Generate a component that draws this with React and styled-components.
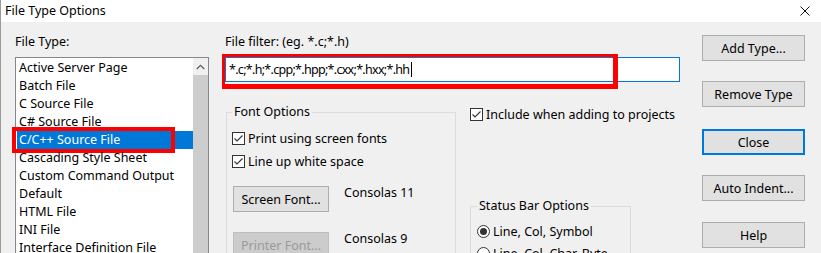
import React from "react";
import styled, { createGlobalStyle } from "styled-components";

const Global = createGlobalStyle`
  html, body { margin: 0; padding: 0; overflow: hidden; background: #f0f0f0; }
  * { box-sizing: border-box; }
`;

const FONT = `"Noto Sans", "Open Sans", sans-serif`;

const Dialog = styled.div`
  width: 821px;
  height: 253px;
  overflow: hidden;
  background: #f0f0f0;
  font-family: ${FONT};
  font-size: 12.5px;
  color: #000;
  border-left: 1px solid #9a9a9a;
`;

const TitleBar = styled.div`
  height: 22px;
  background: #fff;
  display: flex;
  align-items: center;
  justify-content: space-between;
  padding: 0 11px 0 4px;
`;

const Title = styled.span`
  font-size: 12.5px;
  line-height: 16px;
`;

const Body = styled.div`
  display: flex;
  align-items: flex-start;
  padding: 12px 0 0 14px;
`;

const LeftCol = styled.div`
  width: 194px;
  display: flex;
  flex-direction: column;
`;

const Label = styled.div`
  line-height: 16px;
  height: 16px;
  white-space: nowrap;
`;

const ListBox = styled.div`
  margin-top: 7px;
  height: 200px;
  border: 1px solid #828790;
  background: #fff;
  display: flex;
`;

const Items = styled.div`
  flex: 1;
  padding: 1px 0 0 1px;
`;

const Item = styled.div`
  position: relative;
  height: 18px;
  line-height: 18px;
  padding-left: 2px;
  white-space: nowrap;
  background: ${(p) => (p.$selected ? "#0078d7" : "transparent")};
  color: ${(p) => (p.$selected ? "#fff" : "#000")};
`;

const ItemMark = styled.span`
  position: absolute;
  left: -5px;
  top: -4px;
  width: 163px;
  height: 26px;
  border: 4px solid #ff0000;
  pointer-events: none;
`;

const ScrollBar = styled.div`
  width: 15px;
  display: flex;
  flex-direction: column;
  background: #cdcdcd;
`;

const ScrollArrow = styled.div`
  height: 17px;
  background: #f0f0f0;
  display: flex;
  align-items: center;
  justify-content: center;
`;

const MiddleCol = styled.div`
  width: 455px;
  margin-left: 16px;
  display: flex;
  flex-direction: column;
`;

const InputWrap = styled.div`
  position: relative;
  margin-top: 7px;
`;

const FilterField = styled.div`
  height: 25px;
  border: 1px solid #0078d7;
  background: #fff;
  padding-left: 3px;
  display: flex;
  align-items: center;
  white-space: nowrap;
  letter-spacing: -0.7px;
`;

const Caret = styled.span`
  display: inline-block;
  width: 1px;
  height: 15px;
  background: #000;
  margin-left: 2px;
`;

const InputMark = styled.span`
  position: absolute;
  left: -3px;
  top: -3px;
  width: 396px;
  height: 35px;
  border-style: solid;
  border-color: #ff0000;
  border-width: 3px 5px 5px 3px;
  pointer-events: none;
`;

const OptionsRow = styled.div`
  display: flex;
  align-items: flex-start;
  margin-top: 22px;
`;

const Group = styled.fieldset`
  margin: ${(p) => p.$mt || 0}px 0 0 ${(p) => p.$ml || 0}px;
  width: ${(p) => p.$w}px;
  height: ${(p) => p.$h}px;
  border: 1px solid #dcdcdc;
  padding: 0 0 0 ${(p) => p.$pl}px;
  min-width: 0;
`;

const Legend = styled.legend`
  padding: 0 2px;
  line-height: 16px;
  white-space: nowrap;
`;

const CheckRow = styled.div`
  display: flex;
  align-items: center;
  gap: 3px;
  height: 17px;
  white-space: nowrap;
  margin-top: ${(p) => p.$mt || 0}px;
`;

const Box = styled.span`
  width: 13px;
  height: 13px;
  border: 1px solid #333;
  background: #fff;
  display: inline-flex;
  flex: none;
`;

const RadioCircle = styled.span`
  width: 13px;
  height: 13px;
  border: 1px solid #333;
  border-radius: 50%;
  background: #fff;
  display: inline-flex;
  align-items: center;
  justify-content: center;
  flex: none;
`;

const RadioDot = styled.span`
  width: 7px;
  height: 7px;
  border-radius: 50%;
  background: #333;
`;

const FontRow = styled.div`
  display: flex;
  align-items: flex-start;
  margin-top: ${(p) => p.$mt}px;
  padding-left: 1px;
`;

const Button = styled.div`
  width: ${(p) => p.$w}px;
  height: 26px;
  flex: none;
  margin-top: ${(p) => p.$mt || 0}px;
  display: flex;
  align-items: center;
  justify-content: center;
  white-space: nowrap;
  background: ${(p) => (p.$disabled ? "#cccccc" : "#e1e1e1")};
  color: ${(p) => (p.$disabled ? "#9a9a9a" : "#000")};
  border: ${(p) =>
    p.$default ? "2px solid #0078d7" : p.$disabled ? "1px solid #bfbfbf" : "1px solid #adadad"};
`;

const FontName = styled.span`
  margin-left: 15px;
  margin-top: -1px;
  line-height: 16px;
  white-space: nowrap;
`;

const SideCol = styled.div`
  margin-left: 14px;
  margin-top: 2px;
  display: flex;
  flex-direction: column;
`;

const ButtonCol = styled.div`
  width: 103px;
  margin-left: 22px;
  margin-top: 1px;
  display: flex;
  flex-direction: column;
`;

const Check = () => (
  <Box>
    <svg width="11" height="11" viewBox="0 0 11 11">
      <path d="M1.5 5.5 L4 8 L9.5 2.5" fill="none" stroke="#333" strokeWidth="1.1" />
    </svg>
  </Box>
);

const types = [
  "Active Server Page",
  "Batch File",
  "C Source File",
  "C# Source File",
  "C/C++ Source File",
  "Cascading Style Sheet",
  "Custom Command Output",
  "Default",
  "HTML File",
  "INI File",
  "Interface Definition File",
];

const sideButtons = [
  { label: "Add Type...", mt: 0 },
  { label: "Remove Type", mt: 20 },
  { label: "Close", mt: 22, def: true },
  { label: "Auto Indent...", mt: 20 },
  { label: "Help", mt: 21 },
];

export default function App() {
  return (
    <>
      <Global />
      <Dialog>
        <TitleBar>
          <Title>File Type Options</Title>
          <svg width="10" height="10" viewBox="0 0 10 10">
            <path d="M0.5 0.5 L9.5 9.5 M9.5 0.5 L0.5 9.5" stroke="#111" strokeWidth="1" />
          </svg>
        </TitleBar>
        <Body>
          <LeftCol>
            <Label>File Type:</Label>
            <ListBox>
              <Items>
                {types.map((t) => (
                  <Item key={t} $selected={t === "C/C++ Source File"}>
                    {t}
                    {t === "C/C++ Source File" && <ItemMark />}
                  </Item>
                ))}
              </Items>
              <ScrollBar>
                <ScrollArrow>
                  <svg width="9" height="6" viewBox="0 0 9 6">
                    <path d="M0.8 5 L4.5 1.3 L8.2 5" fill="none" stroke="#606060" strokeWidth="1.3" />
                  </svg>
                </ScrollArrow>
              </ScrollBar>
            </ListBox>
          </LeftCol>
          <MiddleCol>
            <Label>File filter: (eg. *.c;*.h)</Label>
            <InputWrap>
              <FilterField>
                *.c;*.h;*.cpp;*.hpp;*.cxx;*.hxx;*.hh
                <Caret />
              </FilterField>
              <InputMark />
            </InputWrap>
            <OptionsRow>
              <Group $ml={1} $w={230} $h={170} $pl={5}>
                <Legend>Font Options</Legend>
                <CheckRow $mt={10}>
                  <Check />
                  Print using screen fonts
                </CheckRow>
                <CheckRow $mt={6}>
                  <Check />
                  Line up white space
                </CheckRow>
                <FontRow $mt={16}>
                  <Button $w={96}>Screen Font...</Button>
                  <FontName>Consolas 11</FontName>
                </FontRow>
                <FontRow $mt={20}>
                  <Button $w={96} $disabled>
                    Printer Font...
                  </Button>
                  <FontName>Consolas 9</FontName>
                </FontRow>
              </Group>
              <SideCol>
                <CheckRow>
                  <Check />
                  Include when adding to projects
                </CheckRow>
                <Group $w={161} $h={90} $pl={6} $mt={75}>
                  <Legend>Status Bar Options</Legend>
                  <CheckRow $mt={9}>
                    <RadioCircle>
                      <RadioDot />
                    </RadioCircle>
                    Line, Col, Symbol
                  </CheckRow>
                  <CheckRow $mt={5}>
                    <RadioCircle />
                    Line, Col, Char, Byte
                  </CheckRow>
                </Group>
              </SideCol>
            </OptionsRow>
          </MiddleCol>
          <ButtonCol>
            {sideButtons.map((b) => (
              <Button key={b.label} $w={103} $mt={b.mt} $default={b.def}>
                {b.label}
              </Button>
            ))}
          </ButtonCol>
        </Body>
      </Dialog>
    </>
  );
}
